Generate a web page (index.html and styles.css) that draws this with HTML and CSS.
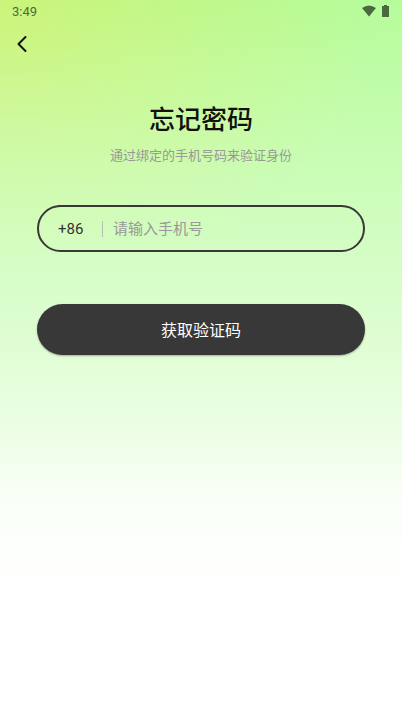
FILE: index.html
```html
<!DOCTYPE html>
<html lang="zh-CN">
  <head>
    <meta charset="utf-8">
    <meta name="viewport" content="width=device-width, initial-scale=1">
    <title>忘记密码</title>
    <link rel="stylesheet" href="styles.css">
  </head>
  <body>
    <div class="status">
      <span>3:49</span>
      <div class="status-icons">
        <svg width="14" height="12" viewBox="0 0 14 12"><path d="M0 3Q7-2 14 3L7 11.500Z" fill="currentColor"/></svg>
        <svg width="7" height="12" viewBox="0 0 7 12"><path d="M2 0h3v1h2v11H0V1h2z" fill="currentColor"/></svg>
      </div>
    </div>

    <header class="nav">
      <button class="back" type="button" aria-label="返回">
        <svg width="10" height="18" viewBox="0 0 10 18"><path d="M8.500 2L1.500 9l7 7" fill="none" stroke="currentColor" stroke-width="2" stroke-linecap="round" stroke-linejoin="round"/></svg>
      </button>
    </header>

    <main class="content">
      <h1>忘记密码</h1>
      <p class="hint">通过绑定的手机号码来验证身份</p>

      <form>
        <div class="phone">
          <label class="code" for="phone">+86</label>
          <input id="phone" type="tel" placeholder="请输入手机号">
        </div>
        <button class="submit" type="button">获取验证码</button>
      </form>
    </main>
  </body>
</html>
```

FILE: styles.css
```css
* { box-sizing: border-box; }

body {
  margin: 0;
  min-height: 100vh;
  font-family: Roboto, "Noto Sans CJK SC", sans-serif;
  color: #333;
  background:
    linear-gradient(to bottom, rgba(255,255,255,.03) 0, rgba(255,255,255,.18) 100px, rgba(255,255,255,.34) 200px, rgba(255,255,255,.59) 350px, rgba(255,255,255,.8) 450px, rgba(255,255,255,.92) 500px, #fff 590px),
    radial-gradient(ellipse 380px 260px at 0 20px, #c9f474 0, rgba(201,244,116,.65) 35%, rgba(201,244,116,0) 100%),
    #b4fc98;
}

button { border: 0; padding: 0; font-family: inherit; cursor: pointer; }
svg { display: block; }

.status {
  display: flex;
  justify-content: space-between;
  align-items: center;
  height: 22px;
  padding: 0 13px 0 12px;
  font-size: 13px;
  color: #4c683f;
}
.status-icons { display: flex; gap: 6px; }

.nav { height: 44px; padding: 0 12px; }
.back {
  display: flex;
  align-items: center;
  width: 44px;
  height: 44px;
  padding-left: 5px;
  background: none;
  color: #111;
}

.content { padding: 34px 37px; text-align: center; }

h1 {
  margin: 0;
  font-size: 26px;
  line-height: 40px;
  font-weight: 500;
  color: #111;
}
.hint {
  margin: 6px 0 0;
  font-size: 13px;
  line-height: 20px;
  color: #999;
}

.phone {
  display: flex;
  align-items: center;
  height: 47px;
  margin: 39px 0 52px;
  padding: 0 19px;
  border: 2px solid #383838;
  border-radius: 24px;
}
.code {
  width: 45px;
  font-size: 15px;
  line-height: 16px;
  text-align: left;
  border-right: 1px solid #b3bfb0;
}
.phone input {
  flex: 1;
  min-width: 0;
  height: 40px;
  padding: 0 0 0 10px;
  border: 0;
  outline: 0;
  background: none;
  font: 15px Roboto, "Noto Sans CJK SC", sans-serif;
  color: #333;
}
.phone input::placeholder { color: #999; }

.submit {
  width: 100%;
  height: 51px;
  padding-bottom: 2px;
  border-radius: 26px;
  background: #383838;
  color: #fff;
  font-size: 16px;
  box-shadow: 0 1px 2px rgba(0,0,0,.3);
}
```
